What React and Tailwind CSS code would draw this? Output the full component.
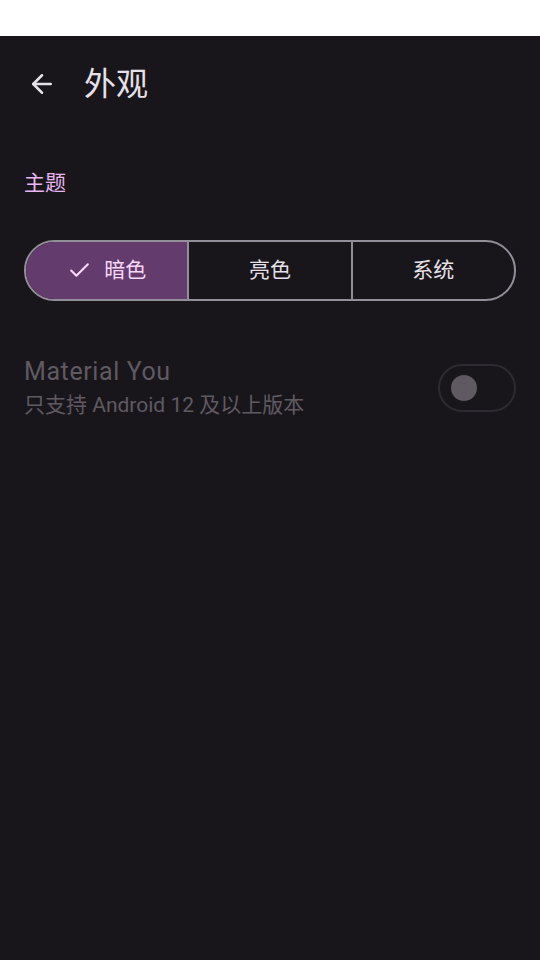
import { ArrowLeft, Check } from 'lucide-react';

const font = { fontFamily: 'Roboto, "Noto Sans CJK SC", sans-serif' };

export default function App() {
  return (
    <div className="w-[540px] h-[960px] bg-white flex flex-col" style={font}>
      <div className="h-9 bg-white shrink-0" />
      <div className="flex-1 bg-[#19161b] flex flex-col">
        {/* Header */}
        <div className="h-[96px] flex items-center px-[27px] gap-[27px]">
          <ArrowLeft className="w-[30px] h-[30px] text-[#e6e0e9]" strokeWidth={2} />
          <h1 className="text-[32px] text-[#e6e0e9] leading-none">外观</h1>
        </div>

        {/* Theme section */}
        <div className="px-6 pt-[41px]">
          <div className="text-[21px] leading-none text-[#e8b6f1]">主题</div>
          <div className="mt-[46px] h-[61px] flex rounded-full border-2 border-[#938f99] overflow-hidden">
            <button className="flex-1 flex items-center justify-center gap-3 bg-[#633b6c] text-[#f8d8fb] text-[21px]">
              <Check className="w-[25px] h-[25px]" strokeWidth={2} />
              暗色
            </button>
            <button className="flex-1 flex items-center justify-center border-l-2 border-[#938f99] text-[#e6e0e9] text-[21px]">
              亮色
            </button>
            <button className="flex-1 flex items-center justify-center border-l-2 border-[#938f99] text-[#e6e0e9] text-[21px]">
              系统
            </button>
          </div>
        </div>

        {/* Material You */}
        <div className="mt-[58px] px-6 flex items-center justify-between">
          <div className="flex flex-col gap-[11px]">
            <div className="text-[25px] leading-none tracking-[0.6px] text-[#5f5a62]">Material You</div>
            <div className="text-[21px] leading-none text-[#5f5a62]">只支持 Android 12 及以上版本</div>
          </div>
          <div className="w-[78px] h-[48px] rounded-full border-2 border-[#2e2a31] flex items-center px-[11px]">
            <div className="w-[26px] h-[26px] rounded-full bg-[#5f5a62]" />
          </div>
        </div>
      </div>
    </div>
  );
}
